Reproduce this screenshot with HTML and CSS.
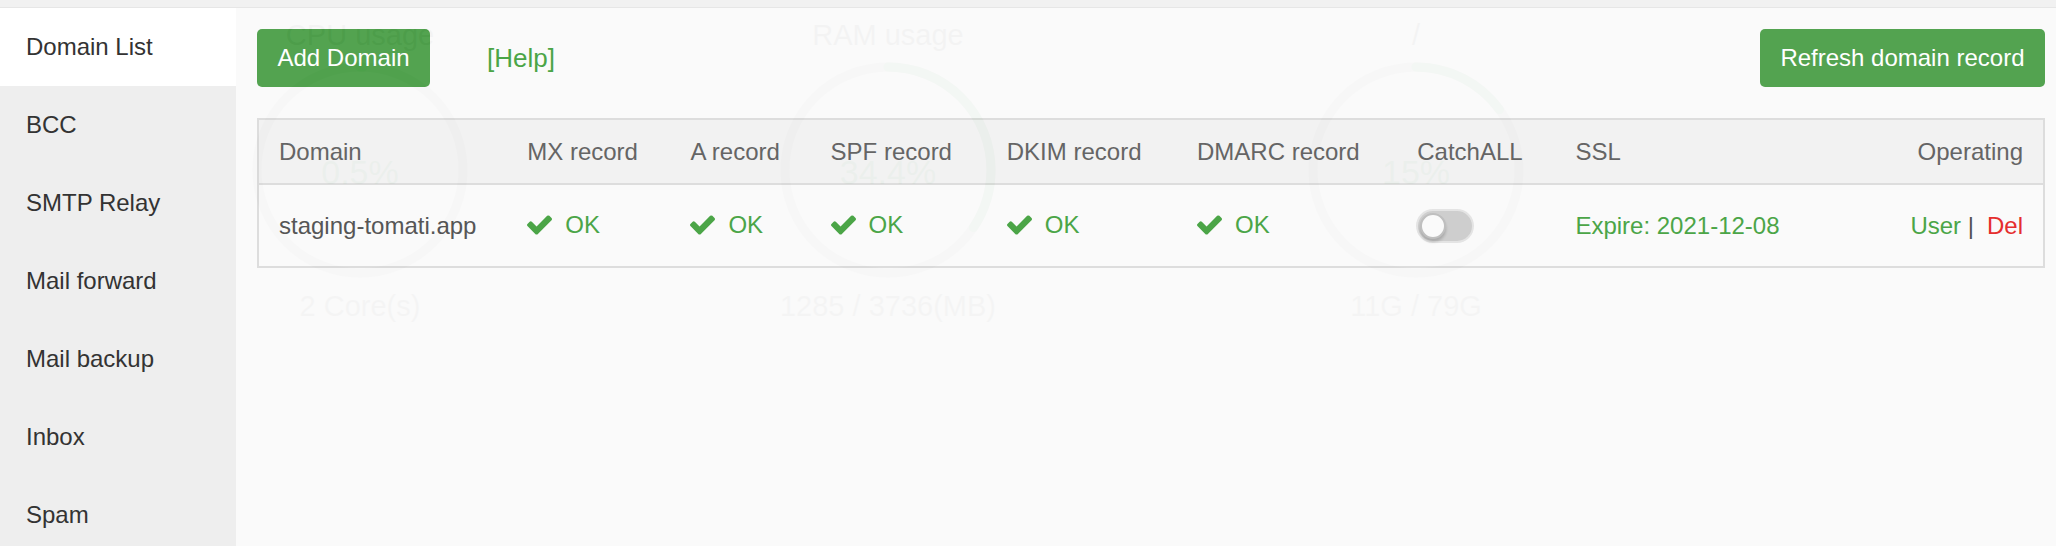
FILE: index.html
```html
<!DOCTYPE html>
<html lang="en">
<head>
<meta charset="utf-8">
<title>Mail Server - Domain List</title>
<link rel="stylesheet" href="styles.css">
</head>
<body>
<div class="topbar"></div>
<div class="stage">
  <div class="dashboard">
    <div class="card">
      <div class="card-title">CPU usage</div>
      <svg class="gauge" viewBox="0 0 216 216" width="216" height="216">
        <circle class="track" cx="108" cy="108" r="103"></circle>
        <circle class="arc" cx="108" cy="108" r="103" stroke-dasharray="3.2 700" transform="rotate(-90 108 108)"></circle>
        <text class="pct" x="108" y="110">0.5%</text>
      </svg>
      <div class="card-foot">2 Core(s)</div>
    </div>
    <div class="card">
      <div class="card-title">RAM usage</div>
      <svg class="gauge" viewBox="0 0 216 216" width="216" height="216">
        <circle class="track" cx="108" cy="108" r="103"></circle>
        <circle class="arc" cx="108" cy="108" r="103" stroke-dasharray="222.6 700" transform="rotate(-90 108 108)"></circle>
        <text class="pct" x="108" y="110">34.4%</text>
      </svg>
      <div class="card-foot">1285 / 3736(MB)</div>
    </div>
    <div class="card">
      <div class="card-title">/</div>
      <svg class="gauge" viewBox="0 0 216 216" width="216" height="216">
        <circle class="track" cx="108" cy="108" r="103"></circle>
        <circle class="arc" cx="108" cy="108" r="103" stroke-dasharray="97.1 700" transform="rotate(-90 108 108)"></circle>
        <text class="pct" x="108" y="110">15%</text>
      </svg>
      <div class="card-foot">11G / 79G</div>
    </div>
  </div>

  <div class="modal">
    <nav class="sidebar">
      <div class="nav-item active">Domain List</div>
      <div class="nav-item">BCC</div>
      <div class="nav-item">SMTP Relay</div>
      <div class="nav-item">Mail forward</div>
      <div class="nav-item">Mail backup</div>
      <div class="nav-item">Inbox</div>
      <div class="nav-item">Spam</div>
    </nav>
    <main class="content">
      <div class="toolbar">
        <button class="btn">Add Domain</button>
        <a class="help" href="#">[Help]</a>
        <span class="spacer"></span>
        <button class="btn">Refresh domain record</button>
      </div>
      <table class="domains">
        <colgroup>
          <col class="c-domain"><col class="c-mx"><col class="c-a"><col class="c-spf"><col class="c-dkim"><col class="c-dmarc"><col class="c-catch"><col class="c-ssl"><col class="c-op">
        </colgroup>
        <thead>
          <tr>
            <th>Domain</th><th>MX record</th><th>A record</th><th>SPF record</th><th>DKIM record</th><th>DMARC record</th><th>CatchALL</th><th>SSL</th><th class="right">Operating</th>
          </tr>
        </thead>
        <tbody>
          <tr>
            <td>staging-tomati.app</td>
            <td><span class="ok"><svg class="check" viewBox="121 334 1550 1188" width="25" height="20"><path d="M1671 566q0 40-28 68l-724 724-136 136q-28 28-68 28t-68-28l-136-136-362-362q-28-28-28-68t28-68l136-136q28-28 68-28t68 28l294 295 656-657q28-28 68-28t68 28l136 136q28 28 28 68z"/></svg>OK</span></td>
            <td><span class="ok"><svg class="check" viewBox="121 334 1550 1188" width="25" height="20"><path d="M1671 566q0 40-28 68l-724 724-136 136q-28 28-68 28t-68-28l-136-136-362-362q-28-28-28-68t28-68l136-136q28-28 68-28t68 28l294 295 656-657q28-28 68-28t68 28l136 136q28 28 28 68z"/></svg>OK</span></td>
            <td><span class="ok"><svg class="check" viewBox="121 334 1550 1188" width="25" height="20"><path d="M1671 566q0 40-28 68l-724 724-136 136q-28 28-68 28t-68-28l-136-136-362-362q-28-28-28-68t28-68l136-136q28-28 68-28t68 28l294 295 656-657q28-28 68-28t68 28l136 136q28 28 28 68z"/></svg>OK</span></td>
            <td><span class="ok"><svg class="check" viewBox="121 334 1550 1188" width="25" height="20"><path d="M1671 566q0 40-28 68l-724 724-136 136q-28 28-68 28t-68-28l-136-136-362-362q-28-28-28-68t28-68l136-136q28-28 68-28t68 28l294 295 656-657q28-28 68-28t68 28l136 136q28 28 28 68z"/></svg>OK</span></td>
            <td><span class="ok"><svg class="check" viewBox="121 334 1550 1188" width="25" height="20"><path d="M1671 566q0 40-28 68l-724 724-136 136q-28 28-68 28t-68-28l-136-136-362-362q-28-28-28-68t28-68l136-136q28-28 68-28t68 28l294 295 656-657q28-28 68-28t68 28l136 136q28 28 28 68z"/></svg>OK</span></td>
            <td><span class="switch"><span class="knob"></span></span></td>
            <td><span class="expire">Expire: 2021-12-08</span></td>
            <td class="right"><a class="lnk-user" href="#">User</a><span class="sep"> |</span><a class="lnk-del" href="#">Del</a></td>
          </tr>
        </tbody>
      </table>
    </main>
  </div>
</div>
</body>
</html>
```

FILE: styles.css
```css
* { box-sizing: border-box; }

html, body {
  margin: 0;
  padding: 0;
  width: 2056px;
  height: 546px;
  overflow: hidden;
  background: #ffffff;
  font-family: "Liberation Sans", Arial, Helvetica, sans-serif;
}

.topbar {
  height: 8px;
  background: #f1f1f1;
  border-bottom: 1px solid #e6e6e6;
}

.stage {
  position: relative;
  height: 538px;
  overflow: hidden;
  background: #ffffff;
}

/* dashboard underneath the modal */
.dashboard {
  display: grid;
  grid-template-columns: repeat(3, 528px);
  padding-left: 96px;
}

.card {
  display: flex;
  flex-direction: column;
  align-items: center;
}

.card-title {
  margin-top: 7px;
  height: 40px;
  line-height: 40px;
  font-size: 29px;
  color: #333333;
}

.gauge {
  margin-top: 7px;
  display: block;
}

.gauge .track {
  fill: none;
  stroke: #a8a8a8;
  stroke-width: 9;
}

.gauge .arc {
  fill: none;
  stroke: #20a53a;
  stroke-width: 9;
  stroke-linecap: round;
}

.gauge .pct {
  font-family: "Liberation Sans", Arial, sans-serif;
  font-size: 34px;
  fill: #20a53a;
  text-anchor: middle;
  dominant-baseline: central;
}

.card-foot {
  margin-top: 8px;
  height: 40px;
  line-height: 40px;
  font-size: 29px;
  color: #555555;
}

/* modal layer over the dashboard */
.modal {
  position: absolute;
  top: 0;
  left: 0;
  width: 100%;
  height: 100%;
  display: flex;
  background: #fafafa;
  opacity: 0.97;
}

.sidebar {
  width: 236px;
  flex: none;
  background: #eeeeee;
  display: flex;
  flex-direction: column;
}

.nav-item {
  height: 78px;
  flex: none;
  line-height: 78px;
  padding-left: 26px;
  font-size: 24px;
  color: #2d2d2d;
}

.nav-item.active {
  background: #ffffff;
}

.content {
  flex: 1;
  padding: 21px 11px 0 21px;
}

.toolbar {
  display: flex;
  align-items: center;
  height: 58px;
}

.btn {
  height: 58px;
  padding: 0 20.5px;
  border: none;
  border-radius: 5px;
  background: #4ea14b;
  color: #ffffff;
  font-family: inherit;
  font-size: 24px;
  line-height: 58px;
}

.help {
  margin-left: 57px;
  font-size: 26px;
  color: #46a342;
  text-decoration: none;
}

.spacer { flex: 1; }

.domains {
  margin-top: 31px;
  width: 100%;
  table-layout: fixed;
  border-collapse: collapse;
  border: 2px solid #dcdcdc;
  font-size: 24px;
}

.c-domain { width: 249px; }
.c-mx { width: 163px; }
.c-a { width: 140px; }
.c-spf { width: 176px; }
.c-dkim { width: 190px; }
.c-dmarc { width: 220px; }
.c-catch { width: 158px; }
.c-ssl { width: 300px; }
.c-op { width: 188px; }

.domains thead tr {
  background: #f2f2f2;
  border-bottom: 2px solid #dcdcdc;
}

.domains th {
  height: 65px;
  padding: 0 20px;
  text-align: left;
  font-weight: normal;
  color: #616161;
  white-space: nowrap;
}

.domains td {
  height: 83px;
  padding: 0 20px;
  color: #515151;
  white-space: nowrap;
  vertical-align: middle;
}

.domains .right { text-align: right; }

.ok {
  display: inline-flex;
  align-items: center;
  color: #46a342;
}

.check {
  fill: #46a342;
  margin-right: 13px;
  display: block;
}

.switch {
  position: relative;
  display: inline-block;
  vertical-align: middle;
  width: 54px;
  height: 30px;
  margin-left: 1px;
  border-radius: 15px;
  background: #cdcdcd;
  box-shadow: 0 0 0 2px #e4e4e4;
}

.knob {
  position: absolute;
  left: 2px;
  top: 2px;
  width: 26px;
  height: 26px;
  border-radius: 50%;
  background: #fafafa;
  border: 2px solid #bdbdbd;
  box-shadow: 0 3px 3px rgba(0, 0, 0, 0.18);
}

.expire { color: #46a342; }

.lnk-user {
  color: #46a342;
  text-decoration: none;
}

.sep { color: #4d4d4d; }

.lnk-del {
  margin-left: 13px;
  color: #e52828;
  text-decoration: none;
}
```
